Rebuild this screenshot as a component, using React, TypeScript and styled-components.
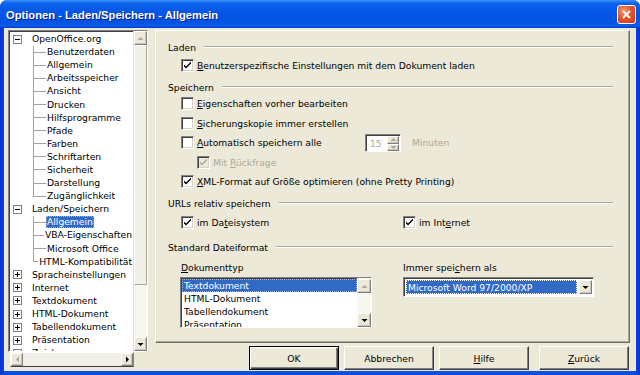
import React from 'react';
import styled, { createGlobalStyle, css } from 'styled-components';

const GlobalStyle = createGlobalStyle`
  html, body {
    margin: 0;
    padding: 0;
    background: #ffffff;
  }
  body {
    font-family: "DejaVu Sans", Verdana, sans-serif;
    font-size: 9.2px;
    color: #000000;
  }
`;

const FACE = '#ECE9D8';
const SELECT = '#316AC5';

const Window = styled.div`
  width: 640px;
  height: 375px;
  display: flex;
  flex-direction: column;
  background: linear-gradient(90deg, #0831D9 0%, #0A4FE0 1%, #0A4FE0 99%, #0831D9 100%);
  border-radius: 7px 7px 0 0;
  overflow: hidden;
`;

const TitleBar = styled.div`
  height: 28px;
  flex: 0 0 28px;
  display: flex;
  align-items: center;
  justify-content: space-between;
  padding: 0 4px 0 6px;
  box-sizing: border-box;
  background: linear-gradient(180deg, #3D8EF5 0%, #0A63EC 12%, #0556E6 45%, #0453E2 80%, #0A5EE9 92%, #003DC8 100%);
`;

const TitleText = styled.span`
  font-family: "Liberation Sans", Arial, sans-serif;
  font-weight: 700;
  font-size: 11.2px;
  color: #ffffff;
  text-shadow: 1px 1px 0 #0A1C8A;
  padding-top: 1px;
`;

const CloseButton = styled.div`
  width: 19px;
  height: 19px;
  box-sizing: border-box;
  border: 1px solid #ffffff;
  border-radius: 3px;
  background: radial-gradient(circle at 35% 30%, #F39A7C 0%, #E5552F 45%, #C8381B 100%);
  display: flex;
  align-items: center;
  justify-content: center;
  margin-top: 1px;
`;

const Body = styled.div`
  flex: 1;
  margin: 0 4px 4px 4px;
  background: ${FACE};
  display: flex;
  padding: 2px 6px 1px 4px;
  box-sizing: border-box;
  gap: 7px;
  min-height: 0;
`;

/* ---------- tree ---------- */

const TreeFrame = styled.div`
  width: 140px;
  display: flex;
  flex-direction: column;
`;

const TreeTop = styled.div`
  height: 322px;
  display: flex;
  box-sizing: border-box;
  border: 1px solid;
  border-color: #808080 #ffffff #ffffff #808080;
  box-shadow: inset 1px 1px 0 #404040;
  background: #ffffff;
`;

const TreeList = styled.div`
  flex: 1;
  overflow: hidden;
  padding-top: 1.5px;
  white-space: nowrap;
`;

const TreeRow = styled.div<{ $level: number }>`
  height: 13.1px;
  display: flex;
  align-items: center;
  padding-left: ${p => (p.$level === 0 ? 4 : 24)}px;
`;

const Expander = styled.span`
  width: 9px;
  height: 9px;
  box-sizing: border-box;
  border: 1px solid #808080;
  background: #ffffff;
  display: flex;
  align-items: center;
  justify-content: center;
  margin-right: 9px;
`;

const Connector = styled.span<{ $last?: boolean }>`
  width: 13px;
  height: 100%;
  background:
    linear-gradient(#A0A0A0, #A0A0A0) left top / 1px ${p => (p.$last ? '50%' : '100%')} no-repeat,
    linear-gradient(#A0A0A0, #A0A0A0) left center / 100% 1px no-repeat;
`;

const TreeLabel = styled.span<{ $selected?: boolean }>`
  padding: 0 1px;
  line-height: 12px;
  ${p =>
    p.$selected &&
    css`
      background: ${SELECT};
      color: #ffffff;
      outline: 1px dotted #9FB6E0;
      outline-offset: -1px;
    `}
`;

const VScroll = styled.div`
  width: 13px;
  display: flex;
  flex-direction: column;
  background: #F4F3EE;
  border-left: 1px solid #E2E0D4;
`;

const ScrollButton = styled.div<{ $h?: number; $w?: number }>`
  width: ${p => (p.$w ? `${p.$w}px` : '100%')};
  height: ${p => (p.$h ? `${p.$h}px` : '100%')};
  box-sizing: border-box;
  background: ${FACE};
  border: 1px solid;
  border-color: #ffffff #808080 #808080 #ffffff;
  box-shadow: inset -1px -1px 0 #C8C5B8;
  display: flex;
  align-items: center;
  justify-content: center;
  flex: none;
`;

const ScrollTrack = styled.div<{ $bg?: string }>`
  flex: 1;
  background: ${p => p.$bg ?? '#F7F6F1'};
`;

const ScrollThumb = styled.div<{ $size: number }>`
  flex: 0 0 ${p => p.$size}px;
  box-sizing: border-box;
  background: #F0EFE8;
  border: 1px solid;
  border-color: #ffffff #A8A596 #A8A596 #ffffff;
`;

const TreeBottom = styled.div`
  height: 15px;
  display: flex;
  padding-left: 2px;
`;

const HScroll = styled.div`
  width: 124px;
  display: flex;
  box-sizing: border-box;
  border: 1px solid;
  border-color: #ffffff #808080 #404040 #ffffff;
  background: #F0EFE8;
`;

/* ---------- right side ---------- */

const RightColumn = styled.div`
  flex: 1;
  display: flex;
  flex-direction: column;
`;

const Panel = styled.div`
  height: 313px;
  box-sizing: border-box;
  border: 1px solid;
  border-color: #ffffff #716F64 #716F64 #ffffff;
  box-shadow: inset -1px -1px 0 #ACA899;
  padding: 9px 16px 0 12px;
  display: flex;
  flex-direction: column;
`;

const SectionHead = styled.div<{ $mt?: number }>`
  height: 14px;
  display: flex;
  align-items: center;
  gap: 8px;
  margin-top: ${p => p.$mt ?? 0}px;
  flex: none;

  &::after {
    content: '';
    flex: 1;
    height: 0;
    border-top: 1px solid #ACA899;
    border-bottom: 1px solid #ffffff;
  }
`;

const CheckRow = styled.div<{ $h?: number; $mt?: number; $indent?: number }>`
  height: ${p => p.$h ?? 19}px;
  margin-top: ${p => p.$mt ?? 0}px;
  padding-left: ${p => p.$indent ?? 13}px;
  display: flex;
  align-items: center;
  gap: 3px;
  flex: none;
`;

const Box = styled.span<{ $disabled?: boolean }>`
  width: 13px;
  height: 13px;
  box-sizing: border-box;
  border: 1px solid;
  border-color: #808080 #ffffff #ffffff #808080;
  box-shadow: inset 1px 1px 0 #404040, inset -1px -1px 0 #D4D0C8;
  background: ${p => (p.$disabled ? FACE : '#ffffff')};
  display: flex;
  align-items: center;
  justify-content: center;
  flex: none;
`;

const Text = styled.span<{ $disabled?: boolean; $w?: number }>`
  color: ${p => (p.$disabled ? '#ACA899' : '#000000')};
  ${p => p.$w && css`width: ${p.$w}px; flex: none;`}
`;

const SpinBox = styled.div`
  width: 36px;
  height: 18px;
  box-sizing: border-box;
  border: 1px solid;
  border-color: #808080 #ffffff #ffffff #808080;
  box-shadow: inset 1px 1px 0 #404040;
  background: #ffffff;
  display: flex;
  align-items: stretch;
  flex: none;
`;

const SpinValue = styled.span`
  flex: 1;
  color: #ACA899;
  padding: 1px 0 0 4px;
  display: flex;
  align-items: center;
`;

const SpinButtons = styled.div`
  width: 12px;
  display: flex;
  flex-direction: column;
  padding: 1px 1px 0 0;
`;

const Minuten = styled.span`
  color: #ACA899;
  margin-left: 8px;
`;

const TwoCols = styled.div<{ $h?: number; $mt?: number; $top?: boolean }>`
  display: grid;
  grid-template-columns: 222px 1fr;
  padding-left: 13px;
  height: ${p => (p.$h ? `${p.$h}px` : 'auto')};
  margin-top: ${p => p.$mt ?? 0}px;
  align-items: ${p => (p.$top ? 'start' : 'center')};
  flex: none;
`;

const Cell = styled.div`
  display: flex;
  align-items: center;
  gap: 3px;
`;

const ListBox = styled.div`
  width: 192px;
  height: 51px;
  margin-left: -1px;
  box-sizing: border-box;
  border: 1px solid;
  border-color: #808080 #ffffff #ffffff #808080;
  box-shadow: inset 1px 1px 0 #404040;
  background: #ffffff;
  display: flex;
  overflow: hidden;
`;

const ListItems = styled.div`
  flex: 1;
  padding: 1px 0 0 1px;
  overflow: hidden;
`;

const ListItem = styled.div<{ $selected?: boolean }>`
  height: 13px;
  line-height: 13px;
  padding-left: 2px;
  ${p =>
    p.$selected &&
    css`
      background: ${SELECT};
      color: #ffffff;
      outline: 1px dotted #9FB6E0;
      outline-offset: -1px;
    `}
`;

const ListScroll = styled.div`
  width: 14px;
  display: flex;
  flex-direction: column;
  background: #F7F6F1;
  padding-top: 1px;
`;

const Dropdown = styled.div`
  width: 191px;
  height: 20px;
  box-sizing: border-box;
  border: 1px solid;
  border-color: #808080 #ffffff #ffffff #808080;
  box-shadow: inset 1px 1px 0 #404040;
  background: #ffffff;
  display: flex;
  padding: 2px 1px 2px 2px;
  gap: 2px;
`;

const DropValue = styled.div`
  flex: 1;
  background: ${SELECT};
  color: #ffffff;
  outline: 1px dotted #ffffff;
  outline-offset: -1px;
  display: flex;
  align-items: center;
  padding-left: 2px;
`;

const ButtonRow = styled.div`
  margin-top: auto;
  display: flex;
  justify-content: flex-end;
  gap: 5px;
  padding-right: 1px;
`;

const Button = styled.div<{ $default?: boolean; $gapBefore?: number }>`
  width: 90px;
  height: 24px;
  box-sizing: border-box;
  background: ${FACE};
  border: 1px solid;
  border-color: #ffffff #404040 #404040 #ffffff;
  box-shadow: inset -1px -1px 0 #808080;
  display: flex;
  align-items: center;
  justify-content: center;
  margin-left: ${p => p.$gapBefore ?? 0}px;
  ${p =>
    p.$default &&
    css`
      border-color: #000000;
      box-shadow: inset 1px 1px 0 #ffffff, inset -1px -1px 0 #404040, inset -2px -2px 0 #808080;
    `}
`;

/* ---------- small drawings ---------- */

const Check = ({ color = '#000000' }: { color?: string }) => (
  <svg width="9" height="9" viewBox="0 0 9 9">
    <path d="M1 3.5 L1 5.5 L3 7.5 L8 2.5 L8 0.5 L3 5.5 Z" fill={color} />
  </svg>
);

const Arrow = ({ dir, color = '#000000' }: { dir: 'up' | 'down' | 'left' | 'right'; color?: string }) => {
  const pts = {
    up: '0.5,4 3.5,1 6.5,4',
    down: '0.5,1 3.5,4 6.5,1',
    left: '4,0.5 1,3.5 4,6.5',
    right: '1,0.5 4,3.5 1,6.5',
  }[dir];
  const vertical = dir === 'up' || dir === 'down';
  return (
    <svg width={vertical ? 7 : 5} height={vertical ? 5 : 7} viewBox={vertical ? '0 0 7 5' : '0 0 5 7'}>
      <polygon points={pts} fill={color} />
    </svg>
  );
};

const PlusMinus = ({ open }: { open: boolean }) => (
  <svg width="7" height="7" viewBox="0 0 7 7">
    <rect x="1" y="3" width="5" height="1" fill="#000" />
    {!open && <rect x="3" y="1" width="1" height="5" fill="#000" />}
  </svg>
);

const U = styled.span`
  text-decoration: underline;
  text-underline-offset: 1px;
`;

type Node = { label: string; level: number; open?: boolean; selected?: boolean; last?: boolean };

const TREE: Node[] = [
  { label: 'OpenOffice.org', level: 0, open: true },
  { label: 'Benutzerdaten', level: 1 },
  { label: 'Allgemein', level: 1 },
  { label: 'Arbeitsspeicher', level: 1 },
  { label: 'Ansicht', level: 1 },
  { label: 'Drucken', level: 1 },
  { label: 'Hilfsprogramme', level: 1 },
  { label: 'Pfade', level: 1 },
  { label: 'Farben', level: 1 },
  { label: 'Schriftarten', level: 1 },
  { label: 'Sicherheit', level: 1 },
  { label: 'Darstellung', level: 1 },
  { label: 'Zugänglichkeit', level: 1, last: true },
  { label: 'Laden/Speichern', level: 0, open: true },
  { label: 'Allgemein', level: 1, selected: true },
  { label: 'VBA-Eigenschaften', level: 1 },
  { label: 'Microsoft Office', level: 1 },
  { label: 'HTML-Kompatibilität', level: 1, last: true },
  { label: 'Spracheinstellungen', level: 0, open: false },
  { label: 'Internet', level: 0, open: false },
  { label: 'Textdokument', level: 0, open: false },
  { label: 'HTML-Dokument', level: 0, open: false },
  { label: 'Tabellendokument', level: 0, open: false },
  { label: 'Präsentation', level: 0, open: false },
  { label: 'Zeichnung', level: 0, open: false },
];

export default function App() {
  return (
    <>
      <GlobalStyle />
      <Window>
        <TitleBar>
          <TitleText>Optionen - Laden/Speichern - Allgemein</TitleText>
          <CloseButton>
            <svg width="9" height="9" viewBox="0 0 9 9">
              <path d="M1 1 L8 8 M8 1 L1 8" stroke="#ffffff" strokeWidth="1.8" />
            </svg>
          </CloseButton>
        </TitleBar>

        <Body>
          <TreeFrame>
            <TreeTop>
              <TreeList>
                {TREE.map((n, i) => (
                  <TreeRow key={i} $level={n.level}>
                    {n.level === 0 ? (
                      <Expander>
                        <PlusMinus open={!!n.open} />
                      </Expander>
                    ) : (
                      <Connector $last={n.last} />
                    )}
                    <TreeLabel $selected={n.selected}>{n.label}</TreeLabel>
                  </TreeRow>
                ))}
              </TreeList>
              <VScroll>
                <ScrollButton $h={14}>
                  <Arrow dir="up" color="#ACA899" />
                </ScrollButton>
                <ScrollThumb $size={240} />
                <ScrollTrack />
                <ScrollButton $h={14}>
                  <Arrow dir="down" />
                </ScrollButton>
              </VScroll>
            </TreeTop>
            <TreeBottom>
              <HScroll>
                <ScrollButton $w={12}>
                  <Arrow dir="left" color="#ACA899" />
                </ScrollButton>
                <ScrollTrack $bg="#F0EFE8" />
                <ScrollButton $w={12}>
                  <Arrow dir="right" />
                </ScrollButton>
              </HScroll>
            </TreeBottom>
          </TreeFrame>

          <RightColumn>
            <Panel>
              <SectionHead>Laden</SectionHead>
              <CheckRow $mt={2}>
                <Box><Check /></Box>
                <Text><U>B</U>enutzerspezifische Einstellungen mit dem Dokument laden</Text>
              </CheckRow>

              <SectionHead $mt={5}>Speichern</SectionHead>
              <CheckRow $h={19.5}>
                <Box />
                <Text><U>E</U>igenschaften vorher bearbeiten</Text>
              </CheckRow>
              <CheckRow $h={19.5}>
                <Box />
                <Text><U>S</U>icherungskopie immer erstellen</Text>
              </CheckRow>
              <CheckRow $h={19.5}>
                <Box />
                <Text $w={165}><U>A</U>utomatisch speichern alle</Text>
                <SpinBox>
                  <SpinValue>15</SpinValue>
                  <SpinButtons>
                    <ScrollButton $h={8}>
                      <Arrow dir="up" color="#ACA899" />
                    </ScrollButton>
                    <ScrollButton $h={7}>
                      <Arrow dir="down" color="#ACA899" />
                    </ScrollButton>
                  </SpinButtons>
                </SpinBox>
                <Minuten>Minuten</Minuten>
              </CheckRow>
              <CheckRow $h={19.5} $indent={29}>
                <Box $disabled><Check color="#ACA899" /></Box>
                <Text $disabled>Mit <U>R</U>ückfrage</Text>
              </CheckRow>
              <CheckRow $h={19.5}>
                <Box><Check /></Box>
                <Text><U>X</U>ML-Format auf Größe optimieren (ohne Pretty Printing)</Text>
              </CheckRow>

              <SectionHead $mt={4.5}>URLs relativ speichern</SectionHead>
              <TwoCols $h={19} $mt={2.5}>
                <Cell>
                  <Box><Check /></Box>
                  <Text>im Da<U>t</U>eisystem</Text>
                </Cell>
                <Cell>
                  <Box><Check /></Box>
                  <Text>im Int<U>e</U>rnet</Text>
                </Cell>
              </TwoCols>

              <SectionHead $mt={8.5}>Standard Dateiformat</SectionHead>
              <TwoCols $h={14} $mt={6}>
                <Text><U>D</U>okumenttyp</Text>
                <Text>Immer spei<U>c</U>hern als</Text>
              </TwoCols>
              <TwoCols $mt={3} $top>
                <ListBox>
                  <ListItems>
                    <ListItem $selected>Textdokument</ListItem>
                    <ListItem>HTML-Dokument</ListItem>
                    <ListItem>Tabellendokument</ListItem>
                    <ListItem>Präsentation</ListItem>
                  </ListItems>
                  <ListScroll>
                    <ScrollButton $h={14}>
                      <Arrow dir="up" color="#ACA899" />
                    </ScrollButton>
                    <ScrollTrack />
                    <ScrollButton $h={14}>
                      <Arrow dir="down" />
                    </ScrollButton>
                  </ListScroll>
                </ListBox>
                <Dropdown>
                  <DropValue>Microsoft Word 97/2000/XP</DropValue>
                  <ScrollButton $w={13}>
                    <Arrow dir="down" />
                  </ScrollButton>
                </Dropdown>
              </TwoCols>
            </Panel>

            <ButtonRow>
              <Button $default>OK</Button>
              <Button>Abbrechen</Button>
              <Button><U>H</U>ilfe</Button>
              <Button $gapBefore={5}><U>Z</U>urück</Button>
            </ButtonRow>
          </RightColumn>
        </Body>
      </Window>
    </>
  );
}
